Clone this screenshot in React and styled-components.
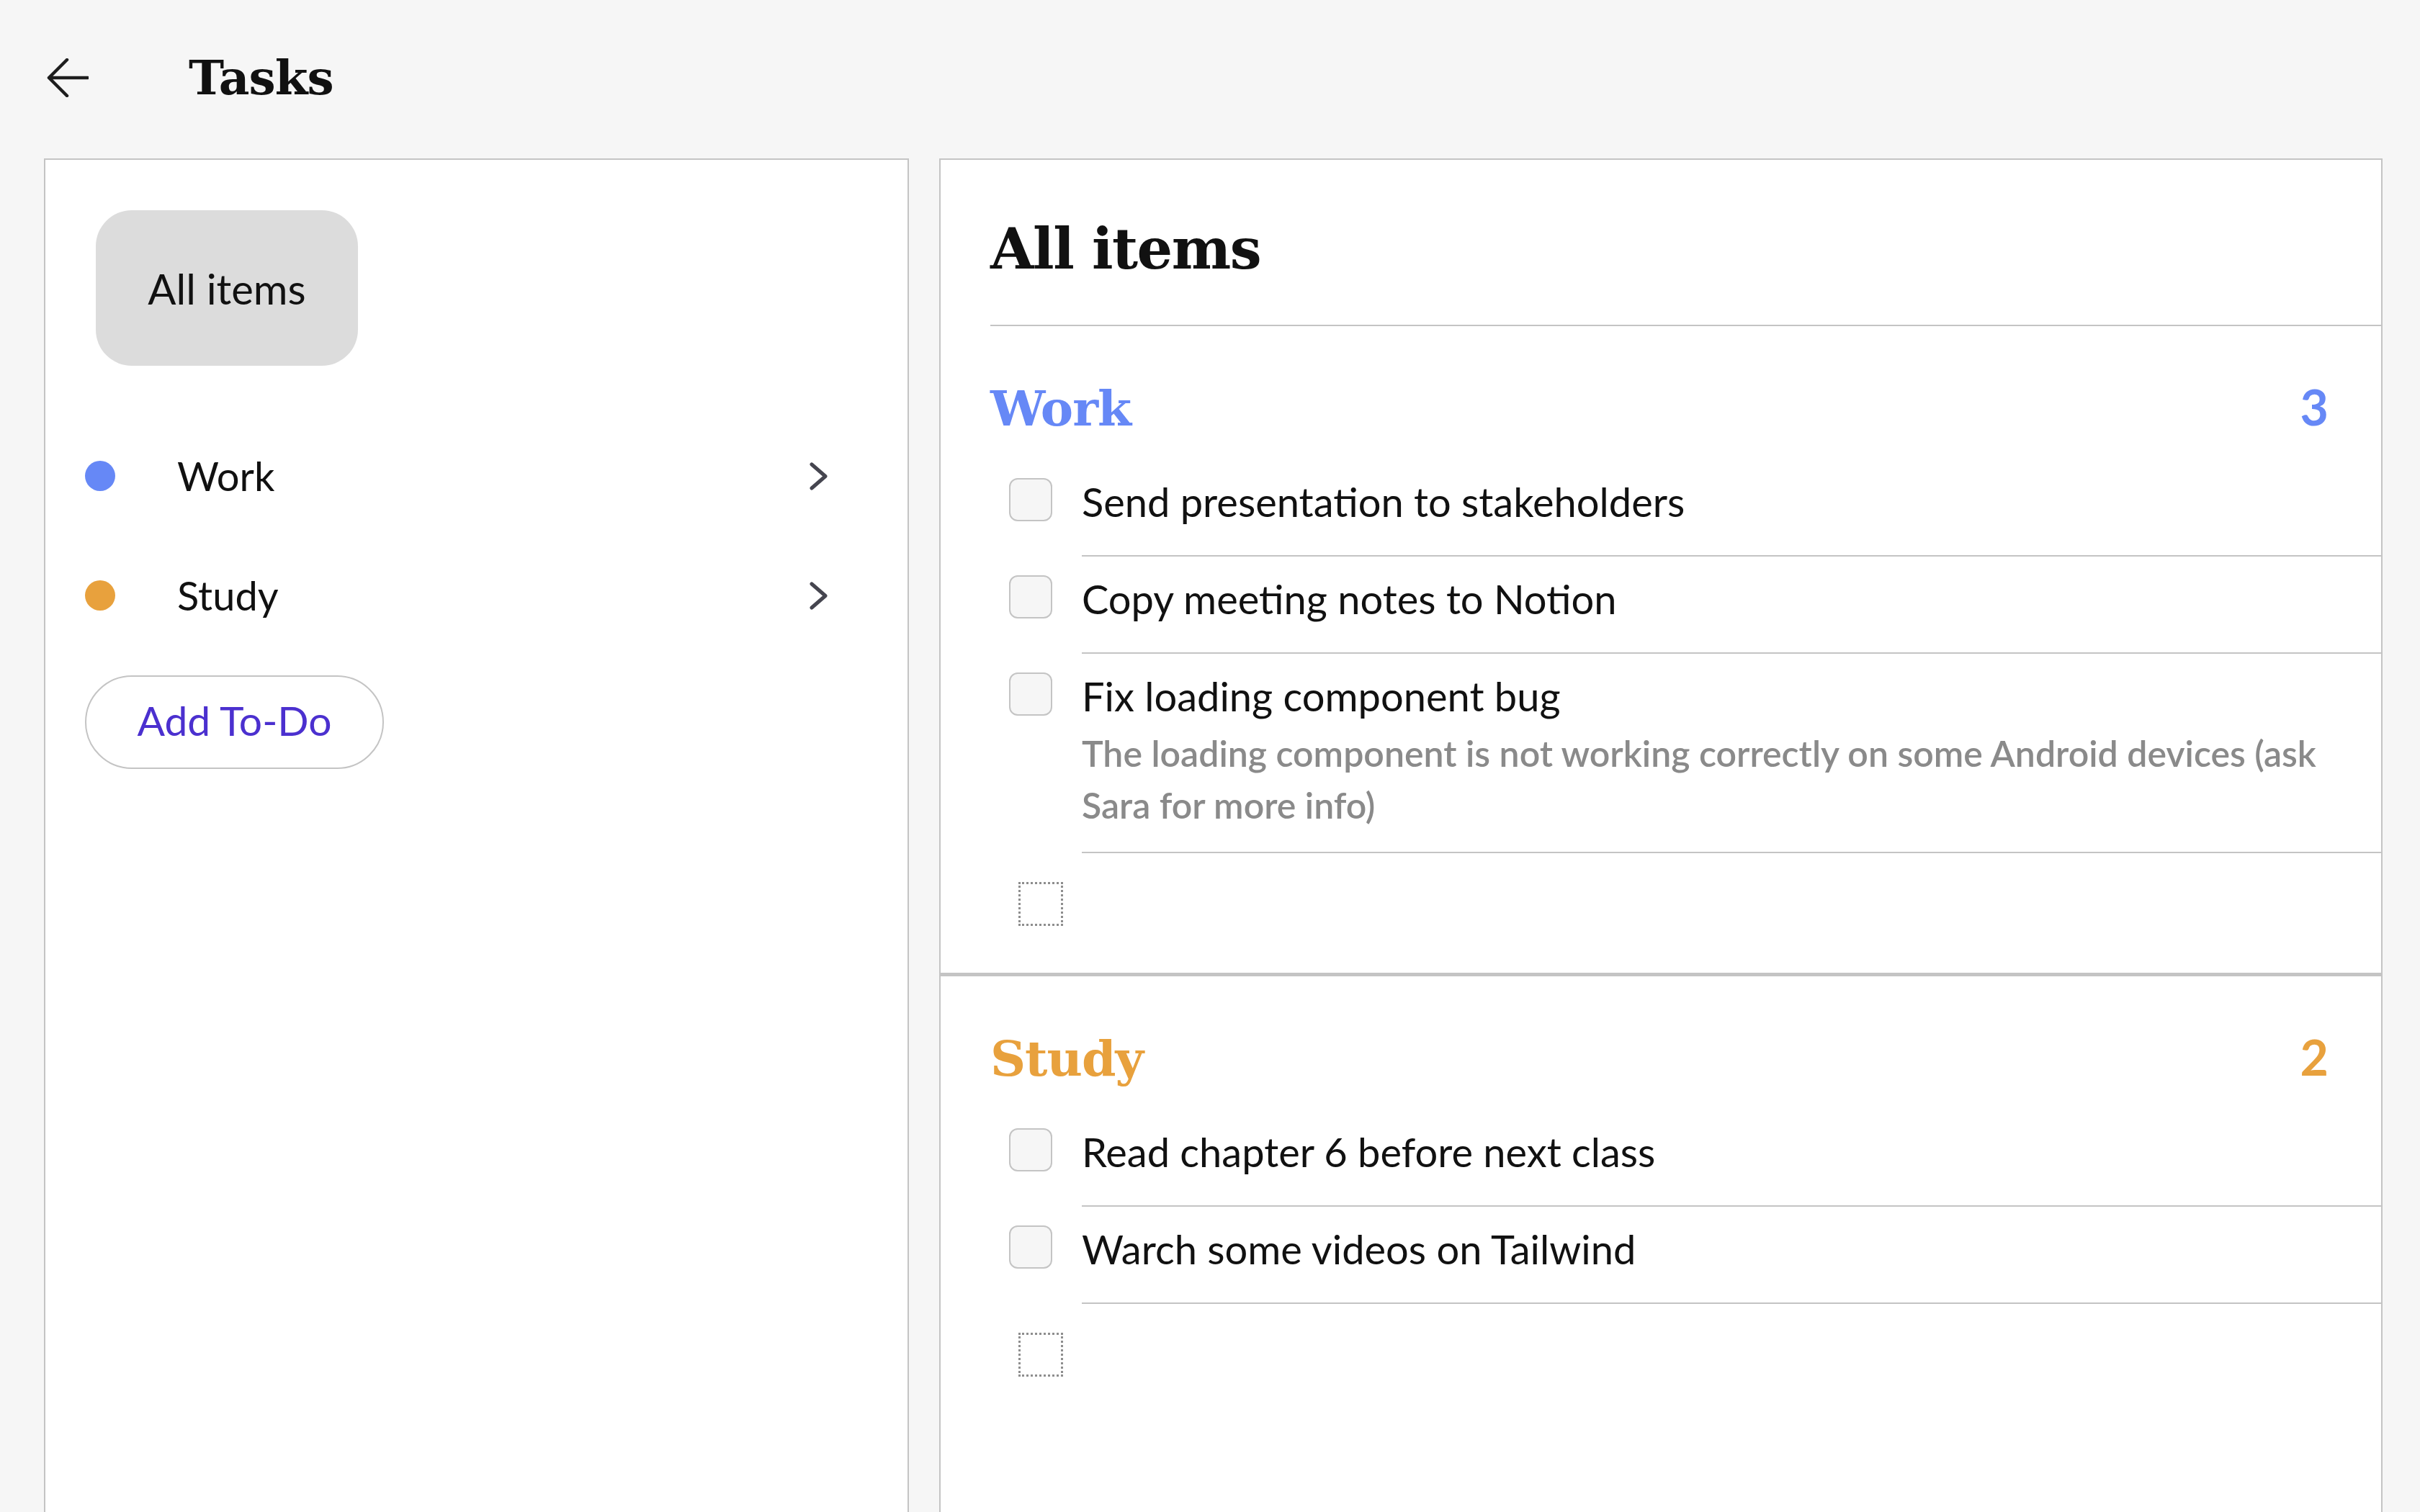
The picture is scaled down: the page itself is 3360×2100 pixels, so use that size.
import React from 'react';
import styled, { createGlobalStyle } from 'styled-components';

const GlobalStyle = createGlobalStyle`
  html, body { margin: 0; padding: 0; background: #f6f6f6; overflow: hidden; }
  body { font-family: Lato, "Noto Sans", sans-serif; color: #111; }
  *, *::before, *::after { box-sizing: border-box; }
`;

const BLUE = '#6688f6';
const ORANGE = '#e8a13d';
const LINE = '#c4c4c4';

const Page = styled.div`
  height: 100vh;
  padding: 0 52px 0 61px;
  display: flex;
  flex-direction: column;
`;

const Header = styled.header`
  height: 220px;
  flex-shrink: 0;
  padding: 0 0 4px 4px;
  display: flex;
  align-items: center;
`;

const BackButton = styled.button`
  border: 0;
  background: none;
  padding: 0;
  width: 58px;
  height: 54px;
  display: flex;
  cursor: pointer;
  margin-right: 139px;
`;

const PageTitle = styled.h1`
  margin: 0;
  font-family: "DejaVu Serif", "Liberation Serif", serif;
  font-weight: 700;
  font-size: 66px;
  line-height: 1;
  color: #111;
  letter-spacing: -1px;
`;

const Columns = styled.div`
  display: grid;
  grid-template-columns: 1201px 1fr;
  gap: 42px;
  align-items: start;
`;

const Panel = styled.section`
  background: #fff;
  border: 2px solid ${LINE};
  min-height: 1900px;
`;

const Sidebar = styled(Panel)`
  padding: 70px 111px 0 55px;
`;

const AllPill = styled.button`
  display: flex;
  align-items: center;
  justify-content: center;
  width: 364px;
  height: 216px;
  margin: 0 0 70px 15px;
  border: 0;
  border-radius: 50px;
  background: #dcdcdc;
  font-family: inherit;
  font-size: 58px;
  color: #111;
  cursor: pointer;
`;

const CategoryRow = styled.div`
  height: 166px;
  display: flex;
  align-items: center;
`;

const Dot = styled.span`
  width: 42px;
  height: 42px;
  border-radius: 50%;
  background: ${(p) => p.$color};
  margin-right: 86px;
  flex-shrink: 0;
`;

const CategoryLabel = styled.span`
  flex: 1;
  font-size: 56px;
  line-height: 1;
  color: #111;
`;

const AddButton = styled.button`
  margin-top: 28px;
  width: 415px;
  height: 130px;
  padding: 0 0 6px;
  border: 2px solid ${LINE};
  border-radius: 65px;
  background: #fff;
  color: #4b30cf;
  font-family: inherit;
  font-size: 57px;
  cursor: pointer;
`;

const PanelHeading = styled.div`
  margin-left: 69px;
  padding: 85px 0 66px;
  border-bottom: 2px solid ${LINE};
`;

const MainTitle = styled.h2`
  margin: 0;
  font-family: "DejaVu Serif", "Liberation Serif", serif;
  font-weight: 700;
  font-size: 78px;
  line-height: 1;
  color: #111;
  letter-spacing: -1.5px;
`;

const Section = styled.section`
  padding-left: 69px;

  & + & {
    border-top: 5px solid ${LINE};
  }
`;

const SectionHeader = styled.div`
  display: flex;
  justify-content: space-between;
  align-items: baseline;
  padding: 78px 73px 0 0;
  margin-bottom: 37px;
  color: ${(p) => p.$color};
`;

const SectionTitle = styled.h3`
  margin: 0;
  font-family: "DejaVu Serif", "Liberation Serif", serif;
  font-weight: 700;
  font-size: 68px;
  line-height: 1;
  letter-spacing: -1px;
`;

const Count = styled.span`
  font-weight: 700;
  font-size: 68px;
  line-height: 1;
`;

const Rows = styled.div`
  margin-left: 26px;
`;

const TaskRow = styled.div`
  display: flex;
  align-items: flex-start;
  padding-top: 21px;
`;

const Checkbox = styled.span`
  width: 60px;
  height: 60px;
  margin: 5px 41px 0 0;
  flex-shrink: 0;
  border: 2px solid #c4c4c4;
  border-radius: 12px;
  background: #f6f6f6;
`;

const TaskBody = styled.div`
  flex: 1;
  padding-bottom: 36px;
  border-bottom: 2px solid ${LINE};
`;

const TaskText = styled.div`
  font-size: 56px;
  line-height: 76px;
  color: #111;
`;

const TaskNote = styled.div`
  margin: 5px 0 -7px;
  padding-right: 24px;
  font-size: 50px;
  line-height: 72px;
  font-weight: 600;
  color: #8a8a8a;
`;

const EmptyRow = styled.div`
  padding: 40px 0 65px 13px;
`;

const NewBox = styled.span`
  display: block;
  width: 62px;
  height: 61px;
  border: 3px dotted #8e8e8e;
`;

const ArrowLeft = () => (
  <svg width="58" height="54" viewBox="0 0 58 54" fill="none">
    <path d="M57 27H3M28 2L3 27l25 25" stroke="#1e1e1e" strokeWidth="4.5" strokeLinecap="round" strokeLinejoin="round" />
  </svg>
);

const Chevron = () => (
  <svg width="25" height="39" viewBox="0 0 25 39" fill="none">
    <path d="M3 3l19 16.5L3 36" stroke="#45454f" strokeWidth="5" strokeLinecap="round" strokeLinejoin="round" />
  </svg>
);

const categories = [
  {
    name: 'Work',
    color: BLUE,
    tasks: [
      { title: 'Send presentation to stakeholders' },
      { title: 'Copy meeting notes to Notion' },
      {
        title: 'Fix loading component bug',
        note: 'The loading component is not working correctly on some Android devices (ask Sara for more info)',
      },
    ],
  },
  {
    name: 'Study',
    color: ORANGE,
    tasks: [
      { title: 'Read chapter 6 before next class' },
      { title: 'Warch some videos on Tailwind' },
    ],
  },
];

export default function App() {
  return (
    <>
      <GlobalStyle />
      <Page>
        <Header>
          <BackButton aria-label="Back">
            <ArrowLeft />
          </BackButton>
          <PageTitle>Tasks</PageTitle>
        </Header>
        <Columns>
          <Sidebar>
            <AllPill>All items</AllPill>
            {categories.map((c) => (
              <CategoryRow key={c.name}>
                <Dot $color={c.color} />
                <CategoryLabel>{c.name}</CategoryLabel>
                <Chevron />
              </CategoryRow>
            ))}
            <AddButton>Add To-Do</AddButton>
          </Sidebar>
          <Panel>
            <PanelHeading>
              <MainTitle>All items</MainTitle>
            </PanelHeading>
            {categories.map((c) => (
              <Section key={c.name}>
                <SectionHeader $color={c.color}>
                  <SectionTitle>{c.name}</SectionTitle>
                  <Count>{c.tasks.length}</Count>
                </SectionHeader>
                <Rows>
                  {c.tasks.map((t) => (
                    <TaskRow key={t.title}>
                      <Checkbox />
                      <TaskBody>
                        <TaskText>{t.title}</TaskText>
                        {t.note && <TaskNote>{t.note}</TaskNote>}
                      </TaskBody>
                    </TaskRow>
                  ))}
                  <EmptyRow>
                    <NewBox />
                  </EmptyRow>
                </Rows>
              </Section>
            ))}
          </Panel>
        </Columns>
      </Page>
    </>
  );
}
